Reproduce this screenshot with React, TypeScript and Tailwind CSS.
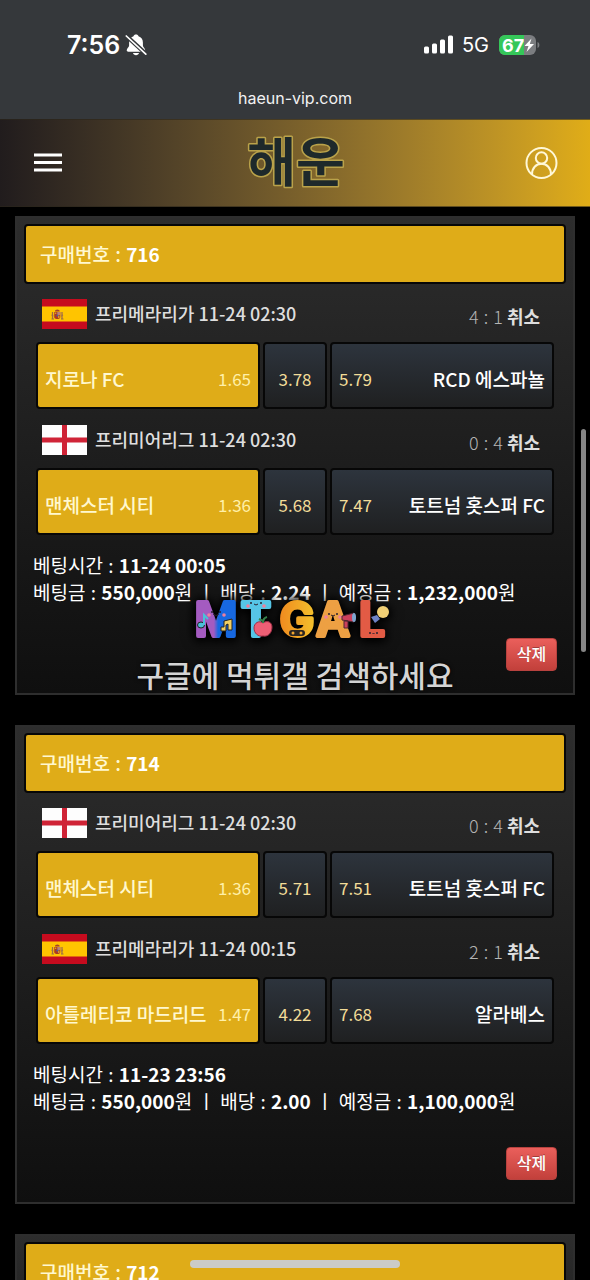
type Country = "es" | "en";

type Leg = {
  country: Country;
  league: string;
  date: string;
  score: [number, number];
  home: string;
  away: string;
  odds: [string, string, string];
};

type Bet = {
  id: string;
  time: string;
  stake: string;
  rate: string;
  payout: string;
  legs: Leg[];
};

const BETS: Bet[] = [
  {
    id: "716",
    time: "11-24 00:05",
    stake: "550,000",
    rate: "2.24",
    payout: "1,232,000",
    legs: [
      { country: "es", league: "프리메라리가", date: "11-24 02:30", score: [4, 1], home: "지로나 FC", away: "RCD 에스파뇰", odds: ["1.65", "3.78", "5.79"] },
      { country: "en", league: "프리미어리그", date: "11-24 02:30", score: [0, 4], home: "맨체스터 시티", away: "토트넘 홋스퍼 FC", odds: ["1.36", "5.68", "7.47"] },
    ],
  },
  {
    id: "714",
    time: "11-23 23:56",
    stake: "550,000",
    rate: "2.00",
    payout: "1,100,000",
    legs: [
      { country: "en", league: "프리미어리그", date: "11-24 02:30", score: [0, 4], home: "맨체스터 시티", away: "토트넘 홋스퍼 FC", odds: ["1.36", "5.71", "7.51"] },
      { country: "es", league: "프리메라리가", date: "11-24 00:15", score: [2, 1], home: "아틀레티코 마드리드", away: "알라베스", odds: ["1.47", "4.22", "7.68"] },
    ],
  },
  { id: "712", time: "", stake: "", rate: "", payout: "", legs: [] },
];

function Flag({ country }: { country: Country }) {
  if (country === "en") {
    return (
      <svg viewBox="0 0 45 30" className="h-[30px] w-[45px] shrink-0" role="img" aria-label="England">
        <path fill="#fdfdfd" d="M0 0h45v30H0z" />
        <path fill="#cf2336" d="M20 0h5v30h-5zM0 12.500h45v5H0z" />
      </svg>
    );
  }
  return (
    <svg viewBox="0 0 45 30" className="h-[30px] w-[45px] shrink-0" role="img" aria-label="Spain">
      <path fill="#c60b1e" d="M0 0h45v30H0z" />
      <path fill="#ffc400" d="M0 7.500h45v15H0z" />
      <path stroke="#9a6a4a" strokeWidth="1.200" d="M10.500 13v7M20 13v7M9.500 20h2.500M19 20h2.500M9.500 16l2 1M19 17l2-1" />
      <path fill="#ad3a22" d="M12.200 13h6.100v5c0 2.800-6.100 2.800-6.100 0z" />
      <path fill="#b98378" d="M15.300 13h3v3h-3z" />
      <path fill="#d99b2b" d="M12.800 13.500h1.500V15h-1.500zM16 16.500h1.500V19H16z" />
      <circle cx="15.300" cy="16.500" r="1" fill="#4c5f9c" />
      <path fill="#a5412b" d="M13 12.500c-.6-2.800 5.200-2.800 4.600 0z" />
    </svg>
  );
}

function StatusBar() {
  return (
    <div className="flex h-[119px] shrink-0 flex-col bg-[#35383b] font-[Inter,'Liberation_Sans',sans-serif] text-white">
      <div className="flex items-center justify-between pt-[31px] pr-[49px] pl-[67px]">
        <div className="flex h-7 items-center gap-[5px]">
          <span className="text-[25px] leading-7 font-semibold">7:56</span>
          <svg viewBox="0 0 22 24" className="h-6 w-[22px]" aria-label="Silent">
            <path
              fill="#fff"
              d="M11 1.500c1.300 0 2.200.7 2.500 1.700 2.800.9 4.400 3.200 4.400 6.200v3.100c0 1.700 2.300 2.900 2.300 4.800 0 .9-.6 1.400-1.600 1.400H3.300c-1 0-1.600-.5-1.600-1.400 0-1.900 2.400-3.100 2.400-4.800V9.400c0-3 1.600-5.300 4.400-6.200.3-1 1.200-1.700 2.500-1.700zM8 20h6c-.3 1.400-1.500 2.200-3 2.200S8.300 21.400 8 20z"
            />
            <path stroke="#35383b" strokeWidth="4.200" d="M1 2.500l20 18.500" />
            <path stroke="#fff" strokeWidth="1.700" strokeLinecap="round" d="M1.300 3l19.500 18.200" />
          </svg>
        </div>
        <div className="flex h-7 items-center">
          <svg viewBox="0 0 30 20" className="h-5 w-[30px]" fill="#fff" aria-label="Signal">
            <rect x="0" y="11.500" width="5" height="7" rx="1.500" />
            <rect x="8" y="8.500" width="5" height="10" rx="1.500" />
            <rect x="16" y="4.500" width="5" height="14" rx="1.500" />
            <rect x="24" y="0.500" width="5" height="18" rx="1.500" />
          </svg>
          <span className="ml-2 text-xl leading-7">5G</span>
          <svg viewBox="0 0 42 20" className="ml-[10px] h-5 w-[42px]" aria-label="Battery">
            <defs>
              <clipPath id="battery">
                <rect width="37" height="20" rx="6" />
              </clipPath>
            </defs>
            <g clipPath="url(#battery)">
              <rect width="37" height="20" fill="#7b7d80" />
              <rect width="25" height="20" fill="#35c759" />
            </g>
            <path fill="#7b7d80" d="M38.500 7c2.500.6 2.500 5.400 0 6z" />
            <text x="3" y="16.500" fontSize="18" fontWeight="700" fill="#fff">67</text>
            <path fill="#fff" d="M32.500 3.500l-7 7.500h4l-2 6 7.500-8h-4.200z" />
          </svg>
        </div>
      </div>
      <div className="mt-[27px] text-center text-base leading-6 text-[#f2f2f2]">haeun-vip.com</div>
    </div>
  );
}

function SiteHeader() {
  return (
    <header className="grid h-[88px] shrink-0 grid-cols-3 items-center border-y border-[#2c261a]/60 bg-linear-to-r from-[#211c1d] to-[#e0ad17] px-8">
      <button type="button" aria-label="메뉴" className="justify-self-start p-0.5">
        <svg viewBox="0 0 28 20" className="h-5 w-7">
          <path stroke="#fff" strokeWidth="3" d="M0 2h28M0 9.500h28M0 17h28" />
        </svg>
      </button>
      <a href="/" aria-label="해운" className="justify-self-center">
        <svg viewBox="0 0 104 80" className="h-20 w-[104px]">
          <text
            x="53"
            y="59"
            textAnchor="middle"
            fontFamily="'Noto Sans CJK KR', sans-serif"
            fontSize="53"
            fontWeight="700"
            fill="#1e292b"
            stroke="#b9a24a"
            strokeWidth="3"
            strokeLinejoin="round"
            paintOrder="stroke"
          >
            해운
          </text>
        </svg>
      </a>
      <button type="button" aria-label="내 정보" className="justify-self-end">
        <svg viewBox="0 0 34 34" className="h-[34px] w-[34px]" fill="none" stroke="#fff8d8" strokeWidth="2">
          <circle cx="17.500" cy="17" r="15" />
          <circle cx="17.500" cy="12" r="5.700" />
          <path d="M8 28.500c0-6.500 4-10.700 9.500-10.700s9.500 4.200 9.500 10.700" />
        </svg>
      </button>
    </header>
  );
}

const cell = "flex h-[67px] items-center rounded border-2 border-[#070707] px-[7px] pt-1.5";
const dark = "bg-linear-to-b from-[#2d343d] to-[#1f2021]";

function Colon() {
  return <span className="mx-px">:</span>;
}

function LegRow({ leg }: { leg: Leg }) {
  return (
    <div className="px-3">
      <div className="flex h-[59px] items-center pt-[3px] pr-[14px] pl-[6px] text-[#dedede]">
        <Flag country={leg.country} />
        <span className="ml-2 pb-0.5 text-lg leading-7 font-medium">
          {leg.league} {leg.date}
        </span>
        <span className="ml-auto pt-1 text-lg leading-7">
          <span className="font-light text-[#b4b4b4]">
            {leg.score[0]} <Colon /> {leg.score[1]}
          </span>{" "}
          <b>취소</b>
        </span>
      </div>
      <div className="grid grid-cols-[1fr_64px_1fr] gap-[3px] text-[19px] leading-7 whitespace-nowrap">
        <button type="button" className={`${cell} justify-between bg-[#dfac18] text-[#fff8cf]`}>
          <span className="font-medium">{leg.home}</span>
          <span className="text-[17px] text-[#fff0a8]">{leg.odds[0]}</span>
        </button>
        <button type="button" className={`${cell} ${dark} justify-center text-[17px] text-[#f2dc98]`}>
          {leg.odds[1]}
        </button>
        <button type="button" className={`${cell} ${dark} justify-between text-white`}>
          <span className="text-[17px] text-[#f2dc98]">{leg.odds[2]}</span>
          <span className="font-medium">{leg.away}</span>
        </button>
      </div>
    </div>
  );
}

function BetCard({ bet }: { bet: Bet }) {
  return (
    <article className="shrink-0 border-2 border-[#2e2e2e] bg-linear-to-b from-[#2d2d2d] to-[#0f0f0f] px-[7px] pt-[6px] pb-[22px]">
      <h2 className="-mb-px flex h-[60px] items-center rounded border-2 border-[#070707] bg-[#dfac18] px-[14px] text-[19px] leading-7 font-medium text-[#fff8cf]">
        <span>
          구매번호 <Colon /> <b className="text-white">{bet.id}</b>
        </span>
      </h2>
      {bet.legs.map((leg) => (
        <LegRow key={leg.home} leg={leg} />
      ))}
      <div className="mt-4 px-[9px] text-[19px] leading-[27px] text-white">
        <p>
          베팅시간 <Colon /> <b>{bet.time}</b>
        </p>
        <p className="whitespace-nowrap">
          베팅금 <Colon /> <b>{bet.stake}</b>원 <span className="mx-px">ㅣ</span> 배당 <Colon /> <b>{bet.rate}</b>{" "}
          <span className="mx-px">ㅣ</span> 예정금 <Colon /> <b>{bet.payout}</b>원
        </p>
        <div className="mt-[33px] flex justify-end">
          <button
            type="button"
            className="h-[33px] w-[51px] rounded border border-[#b8423f] bg-linear-to-b from-[#ea5f5b] to-[#c2403b] pb-1 text-base leading-6 font-medium text-white [text-shadow:0_-1px_0_rgba(0,0,0,0.3)]"
          >
            삭제
          </button>
        </div>
      </div>
    </article>
  );
}

function Watermark() {
  return (
    <div className="pointer-events-none absolute inset-x-0 top-[590px] flex flex-col items-center">
      <svg viewBox="0 0 204 58" className="h-[58px] w-[204px] overflow-visible [filter:drop-shadow(0_0_5px_#000)_drop-shadow(0_2px_5px_#000)]" aria-label="MT.GAL">
        <defs>
          <linearGradient id="letter-m">
            <stop offset="0.450" stopColor="#a45bc0" />
            <stop offset="0.550" stopColor="#1768e0" />
          </linearGradient>
          <linearGradient id="letter-g">
            <stop offset="0" stopColor="#f08a1f" />
            <stop offset="1" stopColor="#f3c02c" />
          </linearGradient>
        </defs>
        <g fontFamily="Inter, sans-serif" fontSize="46" fontWeight="600" strokeWidth="4" strokeLinejoin="round" textAnchor="middle">
          <text x="23" y="46" fill="url(#letter-m)" stroke="url(#letter-m)">M</text>
          <text x="63" y="46" fill="#56c5e6" stroke="#56c5e6">T</text>
          <text x="104" y="46" fill="url(#letter-g)" stroke="url(#letter-g)">G</text>
          <text x="140" y="46" fill="#eda043" stroke="#eda043">A</text>
          <text x="179" y="46" fill="#e25b45" stroke="#e25b45">L</text>
        </g>
        {/* faces */}
        <g fill="#2a2030">
          <circle cx="19" cy="22" r="1" />
          <circle cx="27" cy="22" r="1" />
          <circle cx="58" cy="13" r="1" />
          <circle cx="68" cy="13" r="1" />
          <circle cx="136" cy="24" r="1" />
          <circle cx="144" cy="24" r="1" />
          <circle cx="177" cy="43" r="1" />
          <circle cx="184" cy="43" r="1" />
        </g>
        <g fill="#ee7f9c">
          <circle cx="16" cy="25" r="1.800" />
          <circle cx="31" cy="25" r="1.800" />
          <circle cx="55" cy="16" r="1.800" />
          <circle cx="71" cy="16" r="1.800" />
          <circle cx="133" cy="27" r="1.800" />
          <circle cx="147" cy="27" r="1.800" />
        </g>
        <path stroke="#2a2030" fill="none" d="M20 24q3 3 6 0M61 14q2 2 4 0M138 25q2 2 4 0M179.500 43q1 2 2 0" />
        {/* music notes */}
        <ellipse cx="8" cy="35" rx="3.500" ry="3" fill="#4bc0d8" stroke="#222" />
        <path stroke="#4bc0d8" strokeWidth="2" fill="none" d="M11 35V25l4 4" />
        <path fill="#f1cf63" stroke="#222" d="M31 31l8-2v11h-4v-6l-2 1v6h-5v-4h3z" />
        {/* apple */}
        <path fill="#ee5f75" stroke="#9b2f47" d="M70 33c4-3 9-1 9 4 0 6-4 10-9 9-5 1-9-3-9-8 0-5 5-8 9-5z" />
        <path stroke="#35804a" strokeWidth="2" fill="none" d="M70 33q0-5 4-6M70 31l-4-2" />
        {/* gamepad */}
        <rect x="96" y="40" width="16" height="6" rx="3" fill="#2a2522" />
        <circle cx="100" cy="43" r="1.500" fill="#f0a52f" />
        <circle cx="108" cy="43" r="1.500" fill="#f0a52f" />
        {/* megaphone */}
        <path fill="#cb405c" stroke="#4e2633" d="M149 26l12-3v9l-12-2zM151 31h4v7h-4z" />
        <ellipse cx="161" cy="27.500" rx="2" ry="4.500" fill="#7ca5cf" />
        {/* bulb */}
        <circle cx="190" cy="22" r="6" fill="#f1cf75" />
        <path fill="#6d82c6" d="M184 25l3 4-5 4-4-6z" />
      </svg>
      <p className="text-[30px] leading-[52px] font-medium text-[#d4d4d4] [text-shadow:0_0_4px_#000]">구글에 먹튀갤 검색하세요</p>
    </div>
  );
}

export default function App() {
  return (
    <div className="relative flex h-screen flex-col overflow-hidden bg-black font-['Noto_Sans_CJK_KR',sans-serif]">
      <StatusBar />
      <SiteHeader />
      <main className="flex min-h-0 flex-1 flex-col gap-[30px] overflow-hidden px-[15px] pt-[9px]">
        {BETS.map((bet) => (
          <BetCard key={bet.id} bet={bet} />
        ))}
      </main>
      <Watermark />
      <div className="absolute top-[429px] right-1 h-[223px] w-[5px] rounded-full bg-[#858585]" />
      <div className="absolute bottom-3 left-1/2 h-2 w-[210px] -translate-x-1/2 rounded-full bg-[#cbcbc8]" />
    </div>
  );
}
